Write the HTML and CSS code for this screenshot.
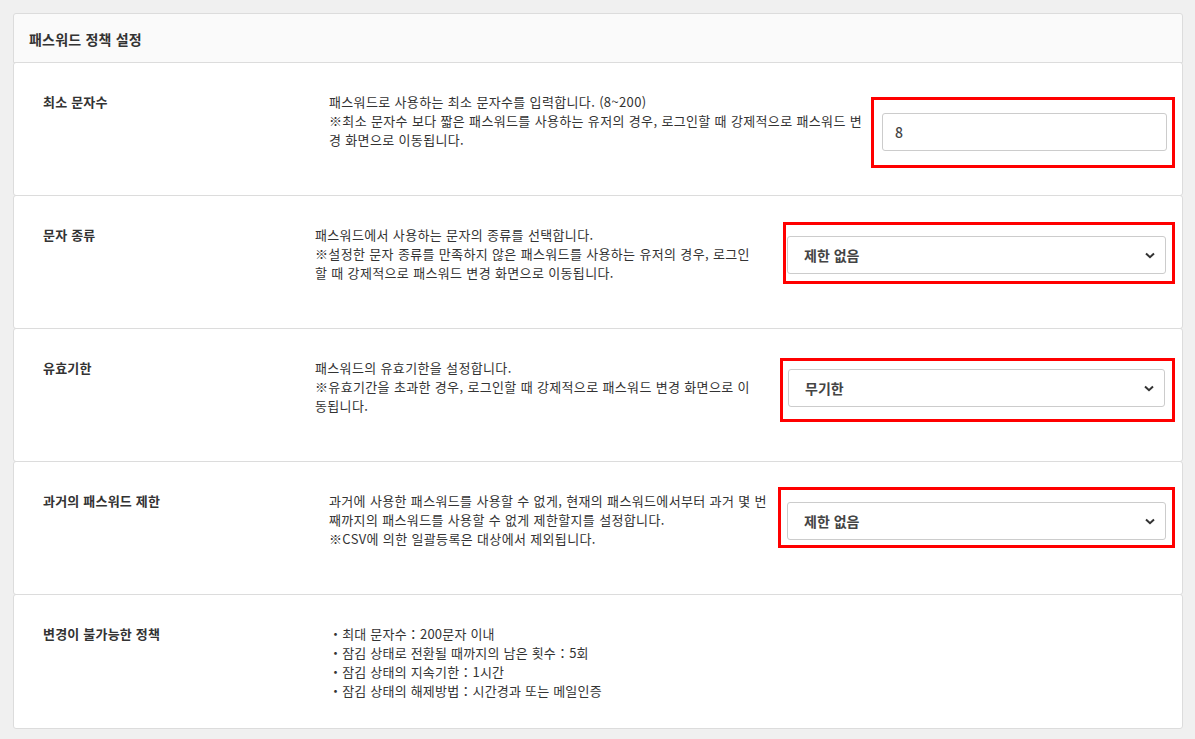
FILE: index.html
```html
<!DOCTYPE html>
<html lang="ko">
<head>
    <meta charset="UTF-8">
    <meta name="viewport" content="width=device-width, initial-scale=1.0">
    <title>패스워드 정책 설정</title>
    <link rel="stylesheet" href="styles.css">
</head>
<body>
    <div class="card">
        <div class="card-head">패스워드 정책 설정</div>

        <!-- 최소 문자수 -->
        <div class="row">
            <div class="label">최소 문자수</div>
            <div class="desc">
                패스워드로 사용하는 최소 문자수를 입력합니다. (8~200)<br>
                ※최소 문자수 보다 짧은 패스워드를 사용하는 유저의 경우, 로그인할 때 강제적으로 패스워드 변<br>경 화면으로 이동됩니다.
            </div>
            <div class="mark mark-min">
                <input class="field" type="text" value="8">
            </div>
        </div>

        <!-- 문자 종류 -->
        <div class="row row-narrow">
            <div class="label">문자 종류</div>
            <div class="desc">
                패스워드에서 사용하는 문자의 종류를 선택합니다.<br>
                ※설정한 문자 종류를 만족하지 않은 패스워드를 사용하는 유저의 경우, 로그인<br>할 때 강제적으로 패스워드 변경 화면으로 이동됩니다.
            </div>
            <div class="mark mark-type">
                <div class="select-wrap">
                    <select class="select">
                        <option>제한 없음</option>
                    </select>
                    <svg class="chevron" width="10" height="7" viewBox="0 0 10 7"><path d="M1 1.5 L5 5.2 L9 1.5" fill="none" stroke="#333" stroke-width="2"/></svg>
                </div>
            </div>
        </div>

        <!-- 유효기한 -->
        <div class="row row-narrow">
            <div class="label">유효기한</div>
            <div class="desc">
                패스워드의 유효기한을 설정합니다.<br>
                ※유효기간을 초과한 경우, 로그인할 때 강제적으로 패스워드 변경 화면으로 이<br>동됩니다.
            </div>
            <div class="mark mark-expire">
                <div class="select-wrap">
                    <select class="select">
                        <option>무기한</option>
                    </select>
                    <svg class="chevron" width="10" height="7" viewBox="0 0 10 7"><path d="M1 1.5 L5 5.2 L9 1.5" fill="none" stroke="#333" stroke-width="2"/></svg>
                </div>
            </div>
        </div>

        <!-- 과거의 패스워드 제한 -->
        <div class="row">
            <div class="label">과거의 패스워드 제한</div>
            <div class="desc">
                과거에 사용한 패스워드를 사용할 수 없게, 현재의 패스워드에서부터 과거 몇 번<br>째까지의 패스워드를 사용할 수 없게 제한할지를 설정합니다.<br>
                ※CSV에 의한 일괄등록은 대상에서 제외됩니다.
            </div>
            <div class="mark mark-history">
                <div class="select-wrap">
                    <select class="select">
                        <option>제한 없음</option>
                    </select>
                    <svg class="chevron" width="10" height="7" viewBox="0 0 10 7"><path d="M1 1.5 L5 5.2 L9 1.5" fill="none" stroke="#333" stroke-width="2"/></svg>
                </div>
            </div>
        </div>

        <!-- 변경이 불가능한 정책 -->
        <div class="row row-last">
            <div class="label">변경이 불가능한 정책</div>
            <ul class="fixed-list">
                <li>・최대 문자수：200문자 이내</li>
                <li>・잠김 상태로 전환될 때까지의 남은 횟수：5회</li>
                <li>・잠김 상태의 지속기한：1시간</li>
                <li>・잠김 상태의 해제방법：시간경과 또는 메일인증</li>
            </ul>
        </div>
    </div>
</body>
</html>
```

FILE: styles.css
```css
body {
    background-color: #f0f0f0;
    color: #333;
    font-family: "Noto Sans CJK KR", "Noto Sans", sans-serif;
    font-size: 13px;
    margin: 0;
    padding: 13px 12px 0 13px;
}

.card {
    display: flex;
    flex-direction: column;
}

.card-head {
    box-sizing: border-box;
    height: 50px;
    background-color: #fafafa;
    border: 1px solid #dcdcdc;
    border-radius: 3px 3px 0 0;
    padding-left: 15px;
    font-size: 14px;
    font-weight: bold;
    letter-spacing: 0.2px;
    line-height: 50px;
}

.row {
    box-sizing: border-box;
    height: 134px;
    margin-top: -1px;
    background-color: white;
    border: 1px solid #dcdcdc;
    border-radius: 3px;
    padding: 29px 7px 0 29px;
    display: flex;
    align-items: flex-start;
}

.row-last {
    height: 135px;
}

.label {
    flex: none;
    width: 286px;
    font-weight: bold;
    letter-spacing: 0.2px;
    line-height: 19px;
}

.row-narrow .label {
    width: 272px;
}

/* 줄바꿈은 원본 화면과 같게 <br>로 지정 */
.desc {
    flex: 1;
    line-height: 19px;
    letter-spacing: 0.35px;
    white-space: nowrap;
    padding-right: 8px;
}

.fixed-list {
    list-style-type: none;
    margin: 0;
    padding: 0;
    line-height: 19px;
    letter-spacing: 0.2px;
}

/* 빨간 강조 테두리 */
.mark {
    flex: none;
    box-sizing: border-box;
    margin-left: auto;
    border: 3px solid #f00;
}

.mark-min {
    width: 304px;
    margin-top: 5px;
    padding: 13px 5px 14px 8px;
}

.mark-type {
    width: 392px;
    margin-top: -3px;
    padding: 11px 6px 7px 1px;
}

.mark-expire {
    width: 395px;
    margin-top: 0;
    padding: 8px 7px 12px 5px;
}

.mark-history {
    width: 397px;
    margin-top: -4px;
    padding: 12px 6px 5px 6px;
}

.field {
    box-sizing: border-box;
    width: 100%;
    height: 38px;
    border: 1px solid #ccc;
    border-radius: 3px;
    padding: 0 12px;
    font-family: inherit;
    font-size: 14px;
    font-weight: 500;
    color: #444;
    display: block;
}

.select-wrap {
    position: relative;
}

.select {
    box-sizing: border-box;
    width: 100%;
    height: 38px;
    border: 1px solid #ccc;
    border-radius: 3px;
    padding: 0 16px;
    background-color: white;
    font-family: inherit;
    font-size: 14px;
    font-weight: bold;
    color: #444;
    appearance: none;
    -webkit-appearance: none;
    display: block;
}

.chevron {
    position: absolute;
    right: 11px;
    top: 16px;
    pointer-events: none;
}
```
